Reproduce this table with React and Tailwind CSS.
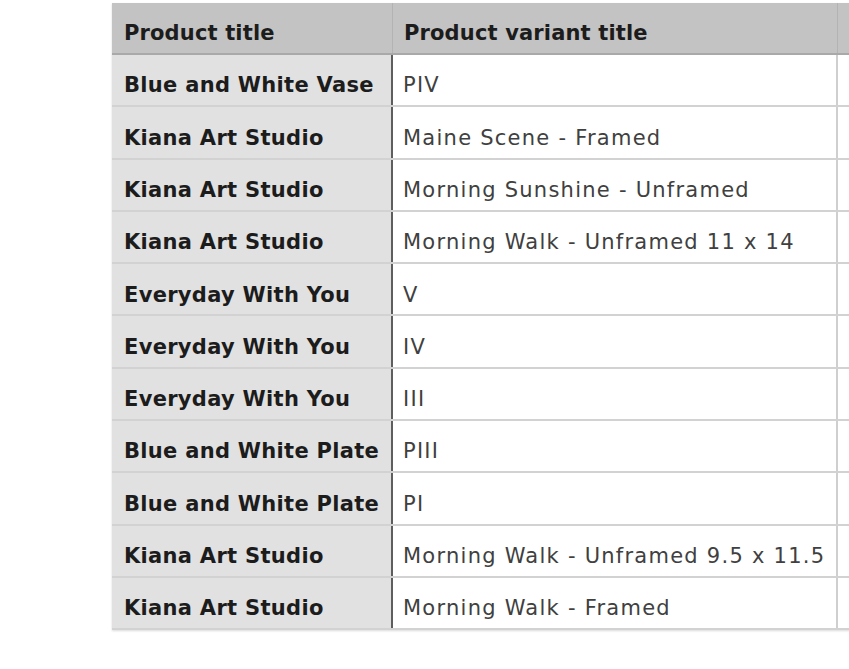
const ROWS = [
  ["Blue and White Vase", "PIV"],
  ["Kiana Art Studio", "Maine Scene - Framed"],
  ["Kiana Art Studio", "Morning Sunshine - Unframed"],
  ["Kiana Art Studio", "Morning Walk - Unframed 11 x 14"],
  ["Everyday With You", "V"],
  ["Everyday With You", "IV"],
  ["Everyday With You", "III"],
  ["Blue and White Plate", "PIII"],
  ["Blue and White Plate", "PI"],
  ["Kiana Art Studio", "Morning Walk - Unframed 9.5 x 11.5"],
  ["Kiana Art Studio", "Morning Walk - Framed"],
];

export default function App() {
  return (
    <div className="w-[849px] h-[669px] overflow-hidden bg-white pt-[3px] pl-[112px] font-['DejaVu_Sans',Verdana,sans-serif] whitespace-nowrap">
      <div className="w-[800px] shadow-[0_1px_2px_rgba(0,0,0,0.15)]">
        <div className="flex h-[52px] bg-[#c3c3c3] border-b-2 border-[#a9a9a9] text-[21px] font-bold tracking-[0.15px] text-[#1c1c1c]">
          <div className="w-[281px] shrink-0 flex items-center pt-[11px] px-3 border-r border-[#b3b3b3]">Product title</div>
          <div className="w-[445px] shrink-0 flex items-center pt-[11px] px-[11px] border-r border-[#b3b3b3]">Product variant title</div>
          <div className="flex-1"></div>
        </div>
        {ROWS.map(([title, variant], i) => (
          <div key={i} className="flex h-[52.3px] border-b-2 border-[#d2d2d2] text-[21px]">
            <div className="w-[281px] shrink-0 flex items-center pt-[12px] px-3 bg-[#e1e1e1] font-bold tracking-[0.3px] text-[#1c1c1c] border-r-2 border-[#5e5e5e]">{title}</div>
            <div className="w-[445px] shrink-0 flex items-center pt-[12px] px-[10px] bg-white tracking-[1.25px] text-[#404040] border-r-2 border-[#cfcfcf]">{variant}</div>
            <div className="flex-1 bg-white"></div>
          </div>
        ))}
      </div>
    </div>
  );
}
